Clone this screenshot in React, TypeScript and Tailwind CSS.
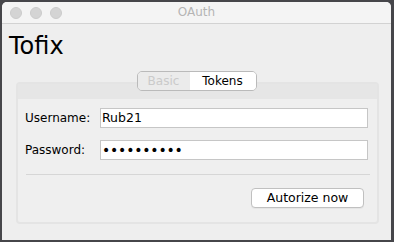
export default function App() {
  return (
    <div className="w-[394px] h-[242px] bg-[#46464a] pt-[2px] pl-[2px] pr-[3px] pb-[2px] font-['DejaVu_Sans',sans-serif]">
      <div className="h-[238px] rounded-t-[5px] bg-[#eeeeee] flex flex-col overflow-hidden">
        {/* title bar */}
        <div className="h-[22px] shrink-0 bg-[#f4f4f4] border-b border-[#d2d2d2] grid grid-cols-[1fr_auto_1fr] items-center">
          <div className="flex items-center gap-[8px] pl-[8px]">
            <span className="w-[12px] h-[12px] rounded-full bg-[#d4d4d4] border border-[#cbcbcb]" />
            <span className="w-[12px] h-[12px] rounded-full bg-[#d4d4d4] border border-[#cbcbcb]" />
            <span className="w-[12px] h-[12px] rounded-full bg-[#d4d4d4] border border-[#cbcbcb]" />
          </div>
          <div className="text-[12px] leading-[21px] text-[#b4b4b4]">OAuth</div>
          <div />
        </div>

        {/* body */}
        <div className="pt-[8px]">
          <div className="pl-[7px] text-[24px] leading-[28px] text-black">Tofix</div>

          <div className="mt-[11px] flex justify-center relative z-10">
            <div className="flex h-[20px] border border-[#bababa] rounded-[5px] overflow-hidden text-[12px] leading-[18px]">
              <div className="w-[52px] bg-[#ebebeb] text-[#cacaca] text-center">Basic</div>
              <div className="w-[66px] bg-white text-black text-center">Tokens</div>
            </div>
          </div>

          <div className="-mt-[9px] ml-[14px] w-[363px] h-[142px] rounded-[4px] border-2 border-[#e4e4e4] bg-[#efefef] flex flex-col">
            <div className="h-[15px] bg-[#e6e6e6]" />
            <div className="pt-[9px] pl-[7px] pr-[9px] flex flex-col gap-[12px]">
              <div className="flex items-center">
                <div className="w-[75px] text-[12px] text-black">Username:</div>
                <div className="flex-1 h-[20px] bg-white border border-[#c6c6c6] pl-[1px] text-[12.5px] leading-[18px] text-black">
                  Rub21
                </div>
              </div>
              <div className="flex items-center">
                <div className="w-[75px] text-[12px] text-black">Password:</div>
                <div className="flex-1 h-[20px] bg-white border border-[#c6c6c6] pl-[1px] text-[14px] leading-[18px] tracking-[-0.2px] text-black">
                  ••••••••••
                </div>
              </div>
            </div>
            <div className="mt-[14px] ml-[8px] mr-[7px] h-px bg-[#d6d6d6]" />
            <div className="mt-[13px] pr-[13px] flex justify-end">
              <button className="w-[113px] h-[20px] rounded-[4px] bg-white border border-[#c0c0c0] text-[12.5px] leading-[18px] text-black shadow-[0_1px_0_rgba(0,0,0,0.04)]">
                Autorize now
              </button>
            </div>
          </div>
        </div>
      </div>
    </div>
  );
}
